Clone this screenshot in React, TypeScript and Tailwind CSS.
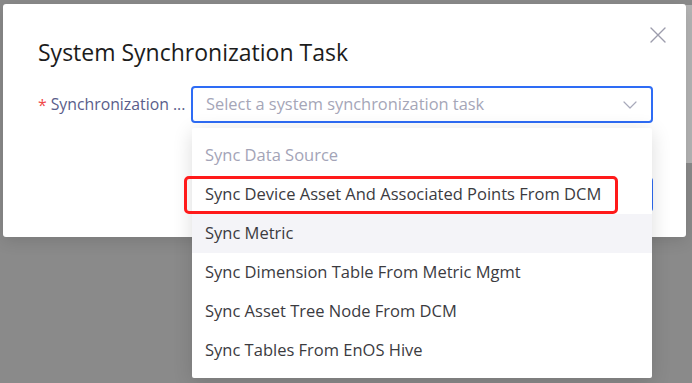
const options = [
  "Sync Device Asset And Associated Points From DCM",
  "Sync Metric",
  "Sync Dimension Table From Metric Mgmt",
  "Sync Asset Tree Node From DCM",
  "Sync Tables From EnOS Hive",
];

export default function App() {
  return (
    <div
      className="relative w-[692px] h-[383px] overflow-hidden bg-[#8a8a8a] flex"
      style={{ fontFamily: '"Open Sans", "Noto Sans", Arial, sans-serif' }}
    >
      {/* dimmed page behind the mask */}
      <div className="flex-1" />
      <div className="w-[6px] flex flex-col pt-[5px]">
        <div className="h-[158px] bg-[#b4b4b4]" />
        <div className="flex-1" />
      </div>

      {/* modal */}
      <div className="absolute left-[3px] top-[4px] w-[683px] h-[233px] bg-white rounded-[3px] pl-[35px] pr-[33px] pt-[32px] shadow-[0_4px_16px_rgba(0,0,0,0.12)]">
        <button className="absolute right-[20px] top-[23px] text-[#9c9cac]">
          <svg width="16" height="16" viewBox="0 0 16 16" fill="none" stroke="currentColor" strokeWidth="1.4" strokeLinecap="round">
            <path d="M1 1L15 15M15 1L1 15" />
          </svg>
        </button>
        <h1 className="text-[23px] leading-[32px] text-[#1c1c1c]">System Synchronization Task</h1>

        <div className="mt-[18px] flex items-center">
          <div className="w-[153px] flex items-center text-[15.8px] text-[#5a5d8a] whitespace-nowrap">
            <span className="text-[#f04848] mr-[4px] mt-[3px]">*</span>
            <span>Synchronization ...</span>
          </div>
          <div className="flex-1 h-[37px] border-2 border-[#2e6cf5] rounded-[4px] flex items-center justify-between pl-[13px] pr-[14px]">
            <span className="text-[16.4px] text-[#a5a6b8]">Select a system synchronization task</span>
            <svg width="14" height="8" viewBox="0 0 14 8" fill="none" stroke="#a8a9ba" strokeWidth="1.2" strokeLinecap="round" strokeLinejoin="round">
              <path d="M1 1L7 7L13 1" />
            </svg>
          </div>
        </div>

        <div className="mt-[54px] flex justify-end">
          <button className="h-[35px] px-[24px] rounded-[4px] bg-[#2e6cf5] text-white text-[15px]">OK</button>
        </div>
      </div>

      {/* dropdown popover */}
      <div className="absolute left-[192px] top-[128px] w-[460px] h-[250px] bg-white rounded-[2px] py-[8px] shadow-[0_4px_20px_rgba(0,0,0,0.14)] text-[16.5px]">
        <div className="h-[39px] flex items-center px-[13px] text-[#a3a4b7]">Sync Data Source</div>
        {options.map((o, i) => (
          <div
            key={o}
            className={`h-[39px] flex items-center px-[13px] text-[#3b3b3f] ${i === 1 ? "bg-[#f4f4f8]" : ""}`}
          >
            {o}
          </div>
        ))}
      </div>

      {/* annotation */}
      <div className="absolute left-[184px] top-[176px] w-[434px] h-[38px] border-[3px] border-[#ff1a1a] rounded-[5px]" />
    </div>
  );
}
